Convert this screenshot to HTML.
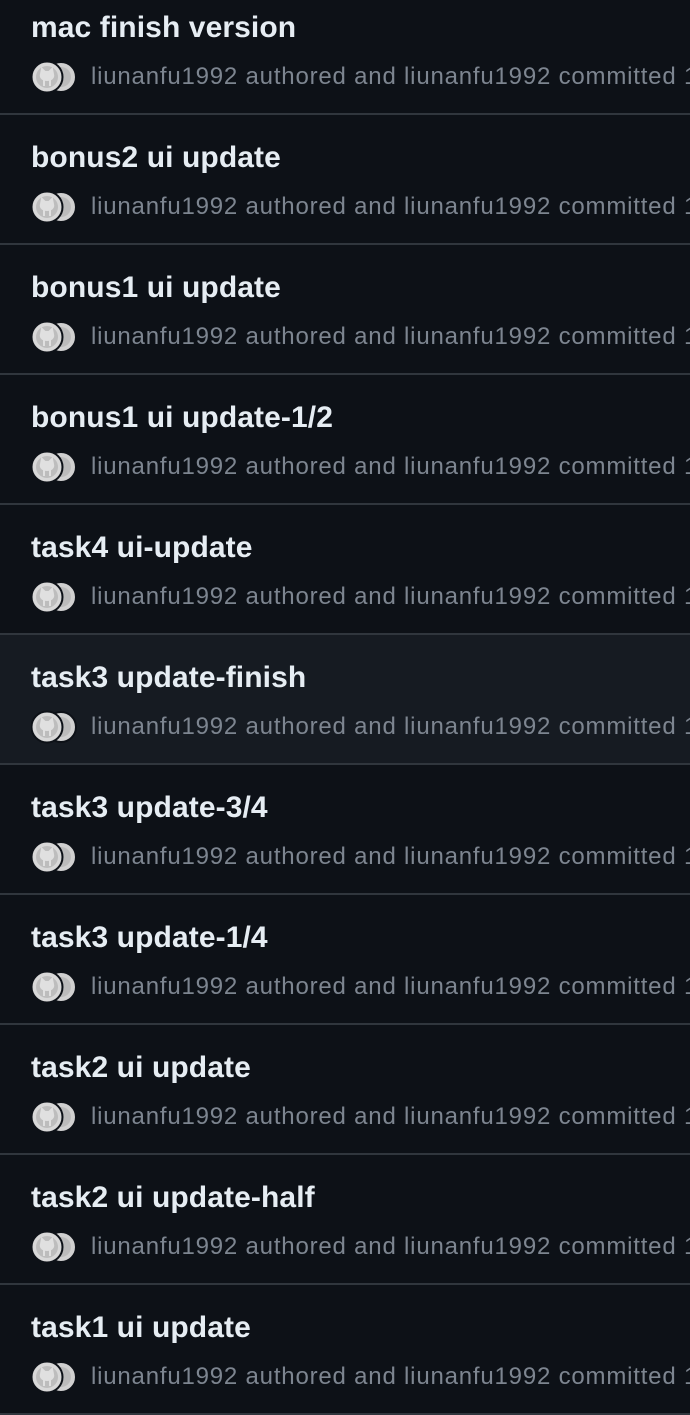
<!DOCTYPE html>
<html><head><meta charset="utf-8"><style>
html,body{margin:0;padding:0;background:#0d1117;width:690px;height:1406px;overflow:hidden;font-family:"Liberation Sans",Helvetica,Arial,sans-serif}
.row{position:absolute;left:0;width:690px;height:128px;border-bottom:2px solid #30363d;}
.row.h{background:#161b22}
.t{position:absolute;left:31px;top:26px;font-size:30px;font-weight:600;color:#e6edf3;white-space:nowrap;letter-spacing:0.1px}
.m{position:absolute;left:91px;top:78px;font-size:24px;color:#7d8590;white-space:nowrap;letter-spacing:0.8px}
.av{position:absolute;left:31px;top:75px;width:48px;height:34px}
</style></head><body>
<script>
const titles=["mac finish version","bonus2 ui update","bonus1 ui update","bonus1 ui update-1/2","task4 ui-update","task3 update-finish","task3 update-3/4","task3 update-1/4","task2 ui update","task2 ui update-half","task1 ui update"];
const av='<svg class="av" viewBox="0 0 48 34"><circle cx="30" cy="17" r="15" fill="#d0d0d0" stroke="#0d1117" stroke-width="2"/><circle cx="30" cy="17" r="10" fill="#bbb"/><circle cx="16" cy="17" r="15.5" fill="#d8d8d8" stroke="#0d1117" stroke-width="2"/><circle cx="16" cy="17" r="11" fill="#bdbdbd"/><path d="M10 14 l1-5 3 3 h4 l3-3 1 5 c1 4-2 6-6 6 c-4 0-7-2-6-6z M13 20 v6 M19 20 v6" fill="#e0e0e0" stroke="#e0e0e0" stroke-width="2"/></svg>';
let h='';
titles.forEach((t,i)=>{
 const top=-15+i*130;
 h+=`<div class="row${i==5?' h':''}" style="top:${top}px"><div class="t">${t}</div>${av}<div class="m">liunanfu1992 authored and liunanfu1992 committed 1</div></div>`;
});
document.write(h);
</script>
</body></html>
